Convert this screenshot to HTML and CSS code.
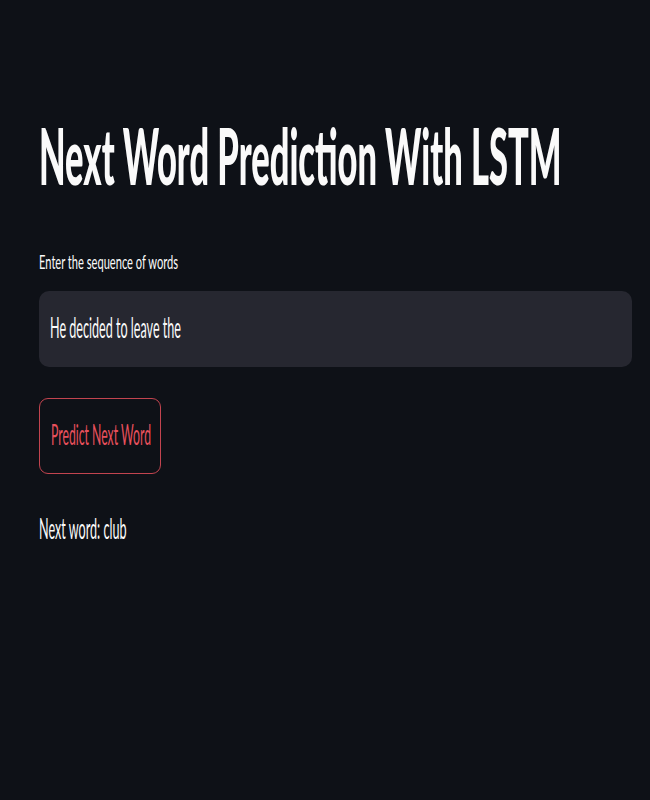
FILE: index.html
```html
<!DOCTYPE html>
<html lang="en">
<head>
<meta charset="utf-8">
<title>Next Word Prediction With LSTM</title>
<link rel="stylesheet" href="styles.css">
</head>
<body>
<main class="app">
  <h1 class="title"><span class="squeeze t-title">Next Word Prediction With LSTM</span></h1>
  <label class="label" for="seq"><span class="squeeze t-label">Enter the sequence of words</span></label>
  <div class="input" id="seq"><span class="squeeze t-input">He decided to leave the</span></div>
  <button class="btn" type="button"><span class="squeeze t-btn">Predict Next Word</span></button>
  <p class="result"><span class="squeeze t-result">Next word: club</span></p>
</main>
</body>
</html>
```
FILE: styles.css
```css
html, body {
  margin: 0;
  padding: 0;
  background: #0e1117;
  color: #fafafa;
  font-family: Lato, "Noto Sans", sans-serif;
}
.app {
  padding: 117px 18px 0 39px;
  display: flex;
  flex-direction: column;
  align-items: stretch;
}
/* text is drawn at its true width and stretched vertically */
.squeeze {
  display: block;
  white-space: nowrap;
  transform-origin: left top;
}
.title {
  margin: 0;
  height: 78px;
  font-weight: 900;
}
.t-title {
  font-size: 34.46px;
  line-height: 34.46px;
  transform: scaleY(2.2635);
}
.label {
  display: block;
  margin-top: 55px;
  height: 24px;
}
.t-label {
  font-size: 11.12px;
  line-height: 13.34px;
  transform: scaleY(1.7);
}
.input {
  margin-top: 17px;
  height: 76px;
  box-sizing: border-box;
  background: #262730;
  border-radius: 10px;
  padding: 0 11px;
  display: flex;
  align-items: center;
}
.t-input {
  font-size: 12.6px;
  line-height: 15.3px;
  transform-origin: left center;
  transform: scaleY(2.2222);
}
.btn {
  align-self: flex-start;
  margin-top: 31px;
  width: 122px;
  height: 76px;
  box-sizing: border-box;
  background: transparent;
  border: 1px solid #c2444f;
  border-radius: 9px;
  color: #e8505c;
  font-family: inherit;
  padding: 0 11px;
  display: flex;
  align-items: center;
  justify-content: flex-start;
}
.t-btn {
  font-size: 12.24px;
  line-height: 14.86px;
  transform-origin: left center;
  transform: scaleY(2.2883);
}
.result {
  margin: 37px 0 0;
  height: 36px;
}
.t-result {
  font-size: 12.6px;
  line-height: 15.6px;
  transform: scaleY(2.32);
}
```
